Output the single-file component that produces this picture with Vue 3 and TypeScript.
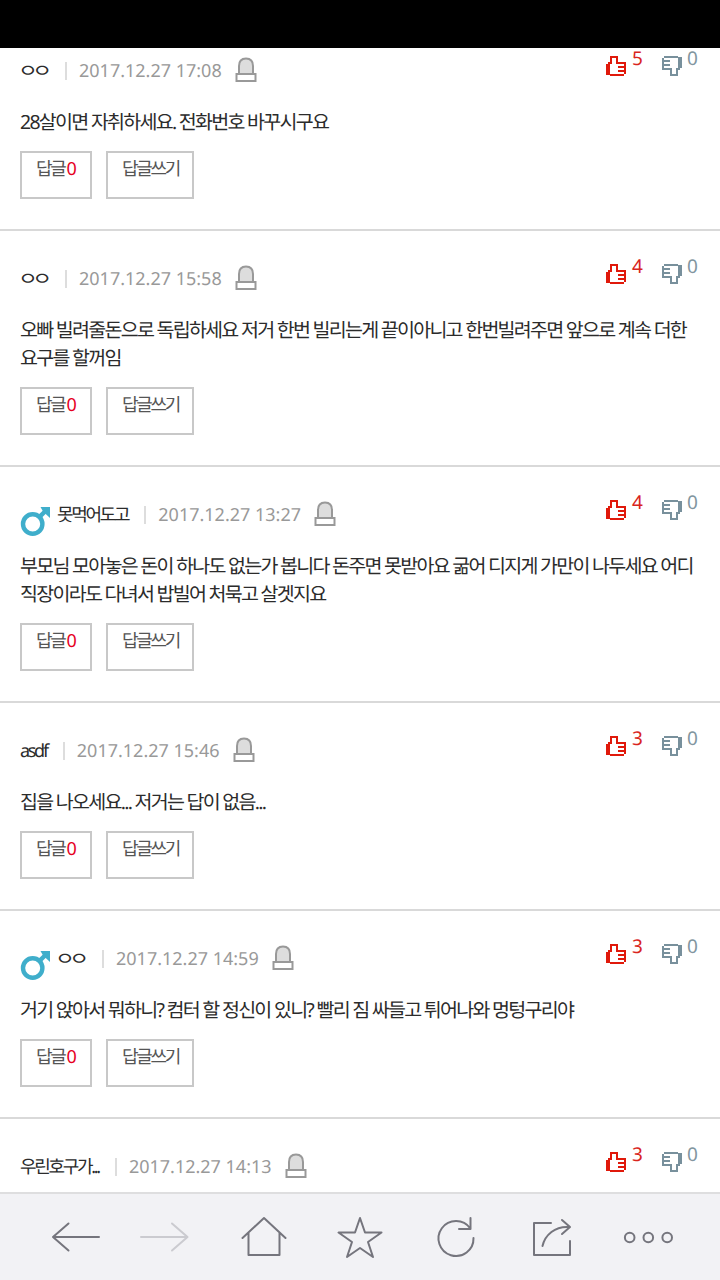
<template>
  <div class="screen">
    <div class="status-bar"></div>

    <main class="viewport">
      <ul class="comment-list">
        <li v-for="item in comments" :key="item.date" class="comment">
          <div class="comment-head">
            <svg v-if="item.male" class="male" viewBox="0 0 30 32">
              <circle cx="12.7" cy="19" r="9.7" />
              <path class="shaft" d="M19 12.3 L26 5.5" />
              <path class="tip" d="M20.5 2 H30 V13 L26.500 9.800 L22.800 6 Z" />
            </svg>
            <span class="name" :class="{ jamo: item.name === 'ㅇㅇ' }">{{ item.name }}</span>
            <span class="divider"></span>
            <span class="date">{{ item.date }}</span>
            <svg class="report" viewBox="0 0 22 26">
              <path class="lamp" d="M4 16 V9 C4 4 6.500 1.500 11 1.500 C15.500 1.500 18 4 18 9 V16" />
              <rect class="base" x="1.500" y="17" width="19" height="7" />
            </svg>
            <div class="votes">
              <svg class="thumb up" viewBox="0 0 20 20">
                <path :d="thumbPath" />
              </svg>
              <span class="count up">{{ item.up }}</span>
              <svg class="thumb down" viewBox="0 0 20 20">
                <path :d="thumbPath" transform="rotate(180 10 10)" />
              </svg>
              <span class="count down">{{ item.down }}</span>
            </div>
          </div>
          <template v-if="item.lines.length">
            <p class="text">
              <span v-for="line in item.lines" :key="line" class="line">{{ line }}</span>
            </p>
            <div class="actions">
              <button class="btn replies">답글<em>{{ item.replies }}</em></button>
              <button class="btn write">답글쓰기</button>
            </div>
          </template>
        </li>
      </ul>
    </main>

    <nav class="toolbar">
      <svg viewBox="0 0 96 88"><path d="M75 45 H29 M44.500 31.500 L29 45 L44.500 58.500" /></svg>
      <svg class="disabled" viewBox="0 0 96 88"><path d="M21 45 H67 M52 31.500 L67.500 45 L52 58.500" /></svg>
      <svg viewBox="0 0 96 88"><path d="M26.500 46 L48 26 L69.500 46 M32.500 41 V63 H63.500 V41" /></svg>
      <svg viewBox="0 0 96 88"><path d="M48 26 L53 40.500 H69.500 L56 50 L61 65 L48 56 L35 65 L40 50 L26.500 40.500 H43 Z" /></svg>
      <svg viewBox="0 0 96 88"><path d="M65.500 46 A17.500 17.500 0 1 1 62.300 36.400 M62.500 26 V37 H51" /></svg>
      <svg viewBox="0 0 96 88"><path d="M47 31 H30 V63 H66 V49 M38.500 54 C41 43 51 34 65 35 M58 28 L66 35 L58 42" /></svg>
      <svg viewBox="0 0 96 88">
        <circle cx="29.700" cy="45.500" r="4.800" />
        <circle cx="48.300" cy="45.500" r="4.800" />
        <circle cx="67.200" cy="45.500" r="4.800" />
      </svg>
    </nav>
  </div>
</template>

<script setup lang="ts">
interface Comment {
  name: string;
  male?: boolean;
  date: string;
  up: number;
  down: number;
  replies: number;
  lines: string[];
}

const comments: Comment[] = [
  {
    name: 'ㅇㅇ',
    date: '2017.12.27 17:08',
    up: 5,
    down: 0,
    replies: 0,
    lines: ['28살이면 자취하세요. 전화번호 바꾸시구요']
  },
  {
    name: 'ㅇㅇ',
    date: '2017.12.27 15:58',
    up: 4,
    down: 0,
    replies: 0,
    lines: [
      '오빠 빌려줄돈으로 독립하세요 저거 한번 빌리는게 끝이아니고 한번빌려주면 앞으로 계속 더한',
      '요구를 할꺼임'
    ]
  },
  {
    name: '못먹어도고',
    male: true,
    date: '2017.12.27 13:27',
    up: 4,
    down: 0,
    replies: 0,
    lines: [
      '부모님 모아놓은 돈이 하나도 없는가 봅니다 돈주면 못받아요 굶어 디지게 가만이 나두세요 어디',
      '직장이라도 다녀서 밥빌어 처묵고 살겟지요'
    ]
  },
  {
    name: 'asdf',
    date: '2017.12.27 15:46',
    up: 3,
    down: 0,
    replies: 0,
    lines: ['집을 나오세요... 저거는 답이 없음...']
  },
  {
    name: 'ㅇㅇ',
    male: true,
    date: '2017.12.27 14:59',
    up: 3,
    down: 0,
    replies: 0,
    lines: ['거기 앉아서 뭐하니? 컴터 할 정신이 있니? 빨리 짐 싸들고 튀어나와 멍텅구리야']
  },
  {
    name: '우린호구가...',
    date: '2017.12.27 14:13',
    up: 3,
    down: 0,
    replies: 0,
    lines: []
  }
];

// 엄지 아이콘: 손목, 손 윤곽, 손가락
const thumbPath = [
  'M0 8h4v11h-4z',
  'M4 0h8v2h-8z M4 2h2v6h-2z M2 6h2v2h-2z M10 2h2v6h-2z',
  'M12 6h8v2h-8z M18 8h2v10h-2z M4 18h14v2h-14z',
  'M12 10h6v2h-6z M12 14h6v2h-6z'
].join(' ');
</script>

<style>
body {
  margin: 0;
  background: #fff;
}
</style>

<style scoped>
.screen {
  display: flex;
  flex-direction: column;
  width: 720px;
  height: 1280px;
  overflow: hidden;
  background: #fff;
  font-family: 'Noto Sans', 'Noto Sans CJK KR', sans-serif;
  text-rendering: geometricPrecision;
}

.status-bar {
  flex: none;
  height: 48px;
  background: #000;
}

.viewport {
  flex: 1;
  min-height: 0;
  overflow: hidden;
}

.comment-list {
  list-style: none;
  margin: -25px 0 0;
  padding: 0;
}

.comment {
  box-sizing: border-box;
  padding: 32px 20px 30px;
  border-bottom: 2px solid #d9d9d9;
}

.comment-head {
  display: flex;
  align-items: center;
  height: 30px;
}

.male {
  flex: none;
  width: 30px;
  height: 32px;
  margin: 14px 7px 0 0;
}

.male circle,
.male .shaft {
  fill: none;
  stroke: #3faecb;
  stroke-width: 4.4;
}

.male .tip {
  fill: #3faecb;
}

.name {
  margin-top: 2px;
  font-size: 18px;
  line-height: 30px;
  letter-spacing: -2.3px;
  color: #2b2b2b;
  white-space: nowrap;
}

.jamo {
  width: 31px;
  margin: 2px 0 0 -2px;
  letter-spacing: -4.6px;
  transform: scaleX(1.2);
  transform-origin: left center;
}

.divider {
  width: 2px;
  height: 18px;
  margin: 2px 12px 0 16px;
  background: #ddd;
}

.date {
  margin-top: 2px;
  font-size: 18px;
  line-height: 30px;
  color: #999;
  white-space: nowrap;
}

.report {
  width: 22px;
  height: 26px;
  margin-left: 13px;
}

.report path,
.report rect {
  stroke: #999;
  stroke-width: 2;
}

.lamp {
  fill: #ddd;
}

.base {
  fill: #fff;
}

.votes {
  display: flex;
  align-items: flex-start;
  height: 30px;
  margin-left: auto;
  margin-right: 2px;
}

.thumb {
  width: 20px;
  height: 20px;
  margin-top: 1px;
  shape-rendering: crispEdges;
}

.thumb.up {
  fill: #e0190b;
}

.thumb.down {
  margin-left: 19px;
  fill: #78909c;
}

.count {
  width: 11px;
  margin-left: 6px;
  margin-top: -7px;
  font-size: 19px;
  line-height: 20px;
}

.count.down {
  margin-left: 5px;
}

.count.up {
  color: #d9251d;
}

.count.down {
  color: #8296a0;
}

.text {
  margin: 23px 0 15px;
  font-size: 19.5px;
  line-height: 28px;
  letter-spacing: -1.72px;
  color: #2b2b2b;
}

.line {
  display: block;
  white-space: nowrap;
}

.actions {
  display: flex;
  gap: 14px;
}

.btn {
  display: flex;
  align-items: flex-start;
  justify-content: flex-start;
  box-sizing: border-box;
  height: 48px;
  padding: 2px 0 0 14px;
  border: 2px solid #c8c8c8;
  background: #fff;
  font-family: inherit;
  font-size: 18px;
  line-height: 28px;
  letter-spacing: -2.3px;
  text-rendering: inherit;
  color: #555;
}

.replies {
  width: 72px;
}

.write {
  width: 88px;
}

.btn em {
  margin-left: 2px;
  font-style: normal;
  color: #e6001f;
}

.toolbar {
  flex: none;
  display: flex;
  box-sizing: border-box;
  height: 88px;
  padding: 0 24px;
  border-top: 2px solid #dededf;
  background: #f2f2f5;
}

.toolbar svg {
  flex: none;
  width: 96px;
  height: 88px;
  margin-top: -2px;
  fill: none;
  stroke: #75757d;
  stroke-width: 2;
  stroke-linecap: round;
  stroke-linejoin: round;
}

.toolbar .disabled {
  stroke: #cbcbd0;
}
</style>
